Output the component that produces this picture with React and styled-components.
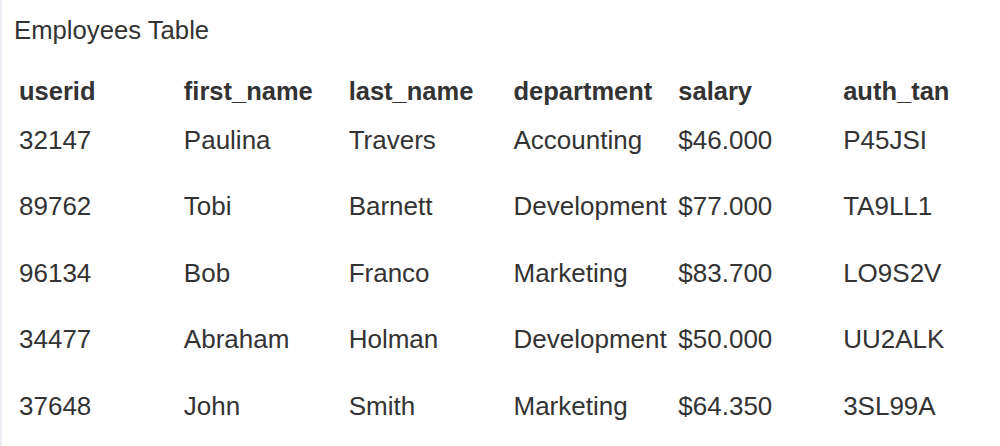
import React from "react";
import styled, { createGlobalStyle } from "styled-components";

const GlobalStyle = createGlobalStyle`
  html, body {
    margin: 0;
    background: #ffffff;
  }
`;

const Page = styled.div`
  min-height: 446px;
  box-sizing: border-box;
  padding: 15px 0 0 14px;
  border-left: 2px solid #ececf3;
  font-family: "Liberation Sans", Arial, sans-serif;
  color: #333333;
`;

const Title = styled.div`
  font-size: 25.7px;
  line-height: 30px;
  margin-left: -2px;
`;

const Table = styled.table`
  margin-top: 31px;
  margin-left: 3px;
  border-collapse: collapse;
  table-layout: fixed;
  width: 989px;
`;

const Th = styled.th`
  width: 164.8px;
  padding: 0 0 18.5px 0;
  text-align: left;
  font-size: 25.5px;
  line-height: 30px;
  font-weight: 700;
  white-space: nowrap;
`;

const Td = styled.td`
  padding: 0 0 36.67px 0;
  font-size: 26px;
  line-height: 30px;
  white-space: nowrap;
  vertical-align: top;
`;

const columns = ["userid", "first_name", "last_name", "department", "salary", "auth_tan"];

const employees = [
  ["32147", "Paulina", "Travers", "Accounting", "$46.000", "P45JSI"],
  ["89762", "Tobi", "Barnett", "Development", "$77.000", "TA9LL1"],
  ["96134", "Bob", "Franco", "Marketing", "$83.700", "LO9S2V"],
  ["34477", "Abraham", "Holman", "Development", "$50.000", "UU2ALK"],
  ["37648", "John", "Smith", "Marketing", "$64.350", "3SL99A"],
];

const App = () => {
  return (
    <>
      <GlobalStyle />
      <Page>
        <Title>Employees Table</Title>
        <Table>
          <thead>
            <tr>
              {columns.map((c) => (
                <Th key={c}>{c}</Th>
              ))}
            </tr>
          </thead>
          <tbody>
            {employees.map((row) => (
              <tr key={row[0]}>
                {row.map((cell, i) => (
                  <Td key={i}>{cell}</Td>
                ))}
              </tr>
            ))}
          </tbody>
        </Table>
      </Page>
    </>
  );
};

export default App;
